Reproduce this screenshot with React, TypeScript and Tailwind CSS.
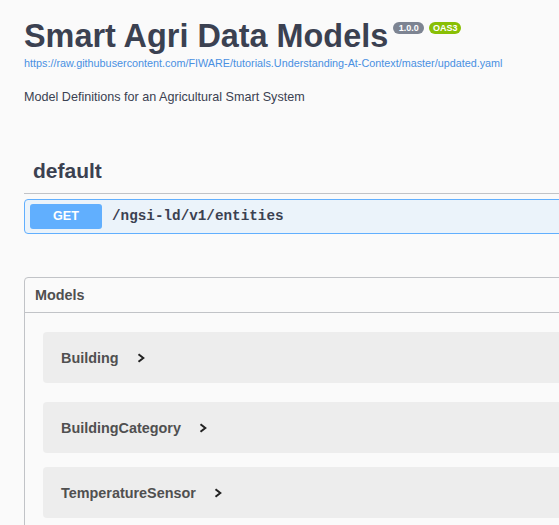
import type { ReactNode } from "react";

function Badge({ children, className }: { children: ReactNode; className: string }) {
  return (
    <span
      className={`mt-[2px] flex h-[12px] items-center justify-center rounded-full text-[9px] font-bold leading-[12px] text-white ${className}`}
    >
      {children}
    </span>
  );
}

function Chevron() {
  return (
    <svg width="8" height="10" viewBox="0 0 8 10" className="ml-[18px] shrink-0">
      <polyline points="1.5,1.2 6.3,5 1.5,8.8" fill="none" stroke="#222" strokeWidth="2" />
    </svg>
  );
}

const models = [
  { name: "Building", gap: "mt-[19px]" },
  { name: "BuildingCategory", gap: "mt-[19px]" },
  { name: "TemperatureSensor", gap: "mt-[14px]" },
];

export default function App() {
  return (
    <div className="h-[525px] w-[559px] overflow-hidden bg-[#fafafa] pl-[24px] pt-[20px] font-['Liberation_Sans',Arial,sans-serif] text-[#3b4151]">
      <div className="w-[600px]">
        {/* info */}
        <div className="flex items-start">
          <h1 className="text-[32.4px] font-bold leading-[32px] text-[#3b4151]">Smart Agri Data Models</h1>
          <div className="ml-[5px] flex items-start gap-[5px]">
            <Badge className="w-[31px] bg-[#7d8492]">1.0.0</Badge>
            <Badge className="w-[32px] bg-[#89bf04]">OAS3</Badge>
          </div>
        </div>
        <div className="mt-[5px] text-[10.8px] leading-[13px] text-[#4990e2]">
          https://raw.githubusercontent.com/FIWARE/tutorials.Understanding-At-Context/master/updated.yaml
        </div>
        <p className="mt-[19px] text-[12.6px] leading-[16px]">Model Definitions for an Agricultural Smart System</p>

        {/* tag */}
        <div className="mt-[42px] border-b border-[#c1c3c7] pb-[8px] pl-[9px] pt-[10px]">
          <h3 className="text-[21px] font-bold leading-[28px]">default</h3>
        </div>
        <div className="mt-[5px] flex items-center rounded-[4px] border border-[#61affe] bg-[#ebf3fa] px-[5px] py-[4px]">
          <span className="flex h-[25px] w-[72px] items-center justify-center rounded-[3px] bg-[#61affe] text-[12.6px] font-bold text-white">
            GET
          </span>
          <span className="ml-[10px] font-['Liberation_Mono',monospace] text-[14.3px] font-bold text-[#3b4151]">
            /ngsi-ld/v1/entities
          </span>
        </div>

        {/* models */}
        <section className="mt-[43px] rounded-[4px] border border-[#c1c3c7]">
          <div className="border-b border-[#c1c3c7] pb-[8px] pl-[10px] pt-[8px]">
            <h4 className="text-[14.4px] font-bold leading-[18px] text-[#505050]">Models</h4>
          </div>
          <div className="pb-[20px] pl-[18px]">
            {models.map((m) => (
              <div key={m.name} className={`${m.gap} flex h-[51px] items-center rounded-[4px] bg-[#ededed] pl-[18px]`}>
                <span className="text-[14.4px] font-bold leading-[18px] text-[#505050]">{m.name}</span>
                <Chevron />
              </div>
            ))}
          </div>
        </section>
      </div>
    </div>
  );
}
